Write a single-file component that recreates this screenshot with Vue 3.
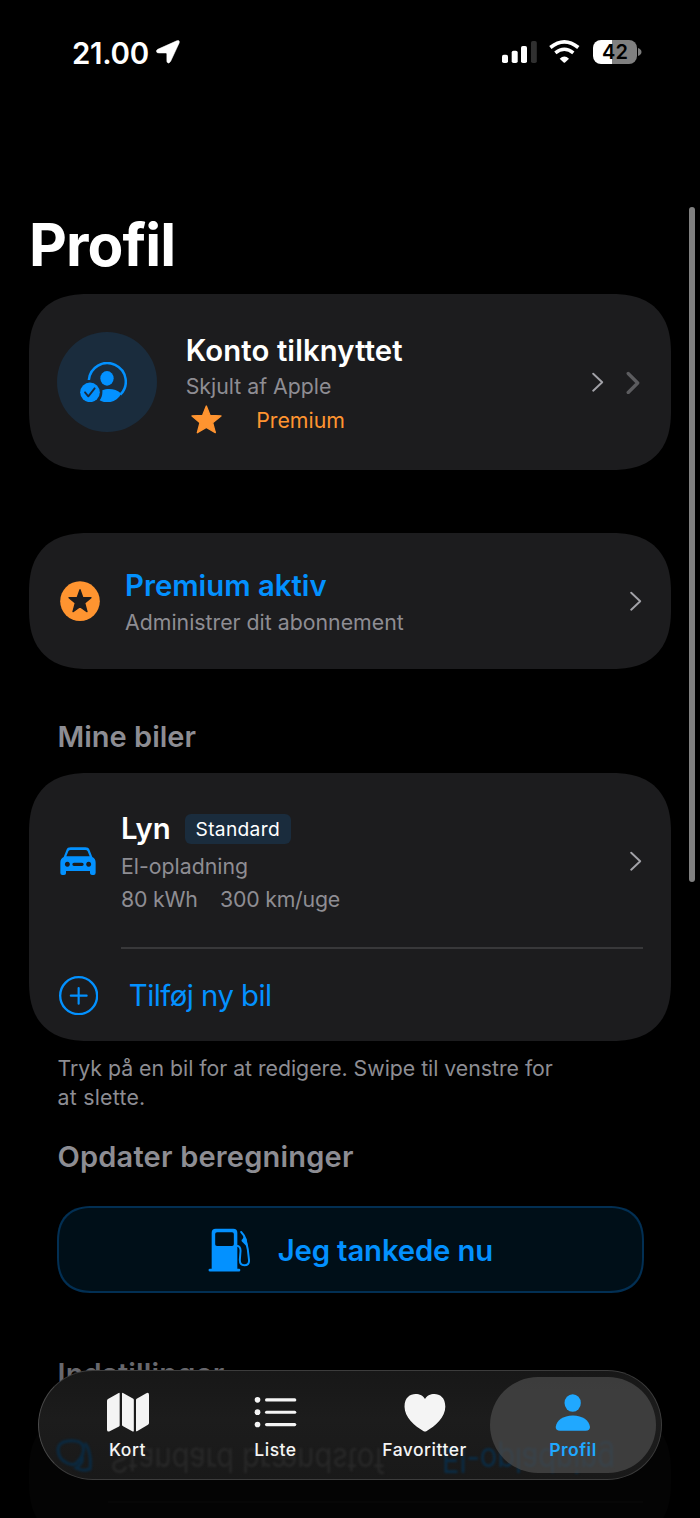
<script setup>
const tabs = [
  { id: 'kort', label: 'Kort' },
  { id: 'liste', label: 'Liste' },
  { id: 'favoritter', label: 'Favoritter' },
  { id: 'profil', label: 'Profil' },
]
const active = 'profil'
</script>

<template>
  <div class="screen">
    <header class="status">
      <div class="status-left">
        <span class="time">21.00</span>
        <svg class="loc" viewBox="468 122 72 71" width="24" height="23.7">
          <path d="M473 150 L530 124.500 Q540 121 537.500 131 L512 186 Q507 195 501.500 189 Q500.500 187 500.500 184 L500.500 164 Q500.500 161 497.500 161 L477 161 Q470 161 469 156.500 Q469 152.500 473 150Z" fill="#fff" stroke="#fff" stroke-width="1.500" />
        </svg>
      </div>
      <div class="status-right">
        <svg viewBox="0 0 35 22" width="35" height="22">
          <rect x="0" y="13.700" width="6" height="8.300" rx="1.800" fill="#fff" />
          <rect x="9.700" y="9.700" width="6" height="12.300" rx="1.800" fill="#fff" />
          <rect x="19" y="5" width="6" height="17" rx="1.800" fill="#fff" />
          <rect x="29" y="0" width="5.800" height="22" rx="1.800" fill="#303030" />
        </svg>
        <svg class="wifi" viewBox="209 61 92 70" width="30.700" height="23.300">
          <path d="M213 83.500 Q255 50 297 83.500" fill="none" stroke="#fff" stroke-width="11" />
          <path d="M228 99.500 Q255 78 282 99.500" fill="none" stroke="#fff" stroke-width="10.500" />
          <path d="M241 117 Q255 104 269 117 L257 128.500 Q255 130 253 128.500Z" fill="#fff" />
        </svg>
        <div class="battery"><span>42</span></div>
        <svg class="tip" viewBox="0 0 4 8" width="4" height="8"><path d="M0 0 Q3.500 1.500 3.500 4 Q3.500 6.500 0 8Z" fill="#7c7c7c" /></svg>
      </div>
    </header>

    <h1>Profil</h1>

    <section class="card account">
      <div class="avatar">
        <svg viewBox="179 227 141 122" width="47" height="40.700">
          <path d="M205.500 281 A55.500 55.500 0 1 1 300 325" fill="none" stroke="#0391ff" stroke-width="7.500" />
          <ellipse cx="260" cy="276" rx="20" ry="22" fill="#0391ff" />
          <path d="M246 312 C262 305 286 306 303 322 C294 338 278 348 261 348 C252 348 245 346 238 342 C244 334 247 324 246 312Z" fill="#0391ff" />
          <circle cx="209" cy="318" r="29.500" fill="#0391ff" />
          <path d="M194 318 L204 330 L223 306" fill="none" stroke="#1a2c3d" stroke-width="5.500" stroke-linecap="round" stroke-linejoin="round" />
        </svg>
      </div>
      <div class="account-text">
        <div class="headline konto">Konto tilknyttet</div>
        <div class="sub skjult">Skjult af Apple</div>
        <div class="premium">
          <svg viewBox="514 362 93 86" width="31" height="28.700">
            <path d="M560 365 L571 393 L604 395 L579 415 L587 445 L560 429 L533 445 L541 415 L517 395 L549 393Z" fill="#ff9430" stroke="#ff9430" stroke-width="4" stroke-linejoin="round" />
          </svg>
          <span>Premium</span>
        </div>
      </div>
      <svg class="chev" viewBox="0 0 13 20" width="13" height="20"><path d="M1.200 1.700 L10.200 10.200 L1.200 18.700" /></svg>
      <svg class="chev bold" viewBox="0 0 15 23" width="15" height="23"><path d="M2.200 2.500 L11.700 12 L2.200 21.500" /></svg>
    </section>

    <section class="card subscription">
      <svg viewBox="121 168 120 121" width="40" height="40.300">
        <circle cx="181" cy="228.500" r="59.500" fill="#ff9430" />
        <path d="M181 194 L189 217 L214 218 L195 234 L202 260 L181 245.500 L160 260 L167 234 L148 218 L173 217Z" fill="#1c1c1e" stroke="#1c1c1e" stroke-width="4" stroke-linejoin="round" />
      </svg>
      <div class="subscription-text">
        <div class="headline blue aktiv">Premium aktiv</div>
        <div class="sub admin">Administrer dit abonnement</div>
      </div>
      <svg class="chev" viewBox="0 0 13 20" width="13" height="20"><path d="M1.200 1.700 L10.200 10.200 L1.200 18.700" /></svg>
    </section>

    <h2 class="h-cars">Mine biler</h2>

    <section class="card cars">
      <div class="car-row">
        <svg class="car" viewBox="121 246 108 85" width="36" height="28.300">
          <path fill="#0391ff" fill-rule="evenodd" d="M132 276 L140 256 C142 249 147 247 153 247 H197 C203 247 208 249 210 256 L218 276 C225 280 228 285 228 293 V323 Q228 330 222 330 H217 Q212 330 211 325 V318 H139 V325 Q139 330 133 330 H128 Q122 330 122 324 V293 C122 285 125 280 132 276Z M140 274 L146 259 Q148 255 153 255 H197 Q202 255 204 259 L210 274Z M143 290.500 a7.500 7.500 0 1 0 .1 0Z M207 290.500 a7.500 7.500 0 1 0 .1 0Z M163 293 H187 a5 5 0 0 1 0 10 H163 a5 5 0 0 1 0 -10Z" />
        </svg>
        <div class="car-text">
          <div class="car-name"><span class="headline">Lyn</span><span class="badge">Standard</span></div>
          <div class="sub el">El-opladning</div>
          <div class="sub specs"><span>80 kWh</span><span>300 km/uge</span></div>
        </div>
        <svg class="chev" viewBox="0 0 13 20" width="13" height="20"><path d="M1.200 1.700 L10.200 10.200 L1.200 18.700" /></svg>
      </div>
      <div class="divider"></div>
      <div class="add-row">
        <svg viewBox="117 632 118 118" width="39.300" height="39.300" fill="none" stroke="#0391ff">
          <circle cx="176" cy="691" r="55.500" stroke-width="7" />
          <path d="M152.500 691 H200 M176 668 V715" stroke-width="6.500" stroke-linecap="round" />
        </svg>
        <span>Tilføj ny bil</span>
      </div>
    </section>

    <p class="footnote">Tryk på en bil for at redigere. Swipe til venstre for<br><span>at slette.</span></p>

    <h2 class="h-calc">Opdater beregninger</h2>

    <button class="refuel">
      <svg viewBox="562 113 128 132" width="42.700" height="44">
        <path fill="#0391ff" fill-rule="evenodd" d="M573 235 V127 Q573 115 585 115 H638 Q650 115 650 127 V235 H655 Q659 235 659 239 Q659 243.500 655 243.500 H568 Q563.500 243.500 563.500 239 Q563.500 235 568 235Z M589 125.500 Q583.500 125.500 583.500 131 V162 Q583.500 167 589 167 H634 Q639.500 167 639.500 162 V131 Q639.500 125.500 634 125.500Z" />
        <path d="M648 166 Q660 167 659.500 182 L657.500 208 Q657 225 671 225 Q686 225 685 209 Q683 177 675 148 Q670 133 661.500 125" fill="none" stroke="#0391ff" stroke-width="6" stroke-linecap="round" />
        <path d="M669 136 L677 145 L682 172 L663 153 Q661 149 665 147 L668 142Z" fill="#0391ff" />
      </svg>
      <span>Jeg tankede nu</span>
    </button>

    <h2 class="h-settings">Indstillinger</h2>
    <section class="card settings"><div class="faint-line"></div></section>

    <div class="scrollbar"></div>

    <nav class="tabbar">
      <div class="glass" aria-hidden="true">
        <svg class="ghost-icon" viewBox="0 0 38 34" width="38" height="34" fill="none" stroke="#0a2a42" stroke-width="3">
          <path d="M3 10 Q4 3 13 2 Q26 1 28 7 Q30 14 24 21 Q20 28 12 24 Q3 20 3 10Z" />
          <path d="M30 4 Q37 14 35 30 Q28 33 21 29 Q29 24 27 17" />
        </svg>
        <span class="ghost grey">Standard brændstof</span>
        <span class="ghost cyan">El-opladning</span>
      </div>
      <div v-for="t in tabs" :key="t.id" class="tab" :class="[t.id, { active: t.id === active }]">
        <svg v-if="t.id === 'kort'" viewBox="258 157 132 121" width="44" height="40.300">
          <path d="M261 183 Q261 180 264 178 L296 160 Q299 158.500 299 162 V257 Q299 259 297 260.500 L269 275 Q261 277.500 261 270Z M306 162 Q306 158 309 160 L340 177 Q341.500 178 341.500 181 V273 Q341.500 277 338 275.500 L308 259 Q306 258 306 255Z M348 181 Q348 179 350 177.500 L379 160.500 Q387 157 387 165 V250 Q387 253 384 255 L351 274.500 Q348 276 348 273Z" fill="#f4f4f4" />
        </svg>
        <svg v-else-if="t.id === 'liste'" viewBox="704 157 130 121" width="43.300" height="40.300" fill="#f4f4f4">
          <circle cx="714.500" cy="180.500" r="8.500" /><circle cx="714.500" cy="217.500" r="8.500" /><circle cx="714.500" cy="254.500" r="8.500" />
          <rect x="737" y="176" width="94" height="9.500" rx="4.700" /><rect x="737" y="213" width="94" height="9.500" rx="4.700" /><rect x="737" y="250" width="94" height="9.500" rx="4.700" />
        </svg>
        <svg v-else-if="t.id === 'favoritter'" viewBox="160 157 126 121" width="42" height="40.300">
          <path d="M223 178 C233 157 284 153 284 201 C284 232 254 259 227 274.500 Q223 276.500 219 274.500 C192 259 161.500 232 161.500 201 C161.500 153 213 157 223 178Z" fill="#f4f4f4" />
        </svg>
        <svg v-else viewBox="616 157 107 121" width="35.700" height="40.300" fill="#20a8ff">
          <ellipse cx="669" cy="190" rx="24.500" ry="26.500" />
          <path d="M631 273 Q618 273 618 262 C620 243 640 227.500 669.500 227.500 C699 227.500 719 243 721 262 Q721 273 708 273Z" />
        </svg>
        <span>{{ t.label }}</span>
      </div>
    </nav>
  </div>
</template>

<style>
html, body { margin: 0; background: #000; }
</style>

<style scoped>
* { box-sizing: border-box; }
.screen {
  position: relative;
  width: 700px;
  height: 1518px;
  overflow: hidden;
  background: #000;
  color: #fff;
  font-family: Inter, "Liberation Sans", sans-serif;
  white-space: nowrap;
}
svg { display: block; flex: none; }
h1, h2, p { margin: 0; }

.status { display: flex; justify-content: space-between; height: 104px; padding: 0 58px 0 72px; align-items: center; }
.status-left { display: flex; align-items: center; }
.time { font-size: 29.500px; font-weight: 600; letter-spacing: -0.300px; line-height: 36px; width: 84px; padding-top: 1px; }
.status-right { display: flex; align-items: center; }
.wifi { margin-left: 12px; }
.battery {
  margin-left: 13px; width: 44px; height: 24.500px; border-radius: 8px;
  background: linear-gradient(90deg, #fff 19px, #808080 19px);
  display: flex; align-items: center; justify-content: center;
}
.battery span { color: #000; font-size: 20px; font-weight: 600; line-height: 24px; }
.tip { margin-left: 1px; }

h1 { font-size: 58.500px; font-weight: 700; line-height: 70px; margin: 106px 0 0 29px; height: 84px; letter-spacing: -0.900px; }

.card { margin: 0 29px; width: 642px; background: #1c1c1e; border-radius: 50px; display: flex; }
.refuel { border-radius: 32px; }
@supports (corner-shape: superellipse(1.3)) {
  .card { border-radius: 60px; corner-shape: superellipse(1.3); }
  .refuel { border-radius: 36px; corner-shape: superellipse(1.3); }
}
.headline { font-size: 29.300px; font-weight: 600; line-height: 36px; }
.sub { font-size: 21.300px; line-height: 32px; color: #8e8d93; }
.blue { color: #0391ff; }
.chev { fill: none; stroke: #a2a2a8; stroke-width: 1.900; stroke-linecap: round; stroke-linejoin: round; }
.chev.bold { stroke: #5c5c5f; stroke-width: 3.300; }

.account { height: 176px; align-items: center; padding: 0 30.500px 0 28px; }
.avatar { width: 100px; height: 100px; border-radius: 50%; background: #1a2c3d; display: flex; align-items: center; justify-content: center; padding-right: 7px; }
.account-text { margin-left: 28.700px; flex: 1; padding-top: 5px; }
.konto { letter-spacing: 0.120px; margin-bottom: 1.500px; }
.premium { display: flex; align-items: center; height: 34px; color: #ff9430; font-size: 21.300px; padding: 1px 0 0 5.500px; }
.premium span { margin-left: 34px; }
.account .bold { margin-left: 21px; }

.subscription { height: 136px; margin-top: 63px; align-items: center; padding: 0 28.500px 0 31px; }
.subscription-text { flex: 1; margin-left: 25px; padding-top: 3.500px; }
.aktiv { margin-bottom: 2px; }

h2 { font-size: 29px; font-weight: 600; line-height: 36px; color: #8d8d93; margin-left: 57px; }
.h-cars { margin-top: 50px; height: 54px; padding-left: 0.500px; }

.cars { height: 268px; flex-direction: column; }
.car-row { height: 174px; display: flex; align-items: center; padding: 3px 28.500px 0 31px; }
.car-text { flex: 1; margin-left: 25px; padding-top: 4px; }
.car-name { display: flex; align-items: center; height: 38px; margin-bottom: 2px; }
.badge { margin-left: 14px; width: 106px; height: 30px; margin-top: -1px; border-radius: 6px; background: #1a2c3d; font-size: 19.200px; letter-spacing: 0.300px; line-height: 31px; text-align: center; }
.specs { display: flex; gap: 22.500px; line-height: 33px; letter-spacing: -0.220px; margin-top: 0.500px; }
.divider { height: 2px; background: #38383a; margin: 0 28px 0 92px; position: relative; top: 1px; }
.add-row { display: flex; align-items: center; height: 94px; padding: 2px 0 0 30px; color: #0391ff; font-size: 29.300px; letter-spacing: -0.530px; }
.add-row span { margin-left: 30.500px; padding-top: 1px; }

.footnote { margin: 13px 0 0 57.500px; font-size: 21.300px; line-height: 28.500px; color: #8d8d93; height: 72px; letter-spacing: -0.030px; }
.footnote span { letter-spacing: 0.250px; }
.h-calc { margin-top: 13px; margin-bottom: 31px; padding-left: 0.500px; letter-spacing: 0.200px; }

.refuel {
  display: flex; align-items: center; width: 587px; height: 87px; margin: 0 0 0 56.500px; padding: 0 0 0 149px;
  border: 2px solid #022f53; background: #000f18; color: #0391ff;
  font: 600 29.300px/36px Inter, "Liberation Sans", sans-serif; text-align: left;
}
.refuel span { margin-left: 27.500px; letter-spacing: -0.150px; padding-top: 2px; }

.h-settings { margin-top: 63px; color: #68686d; padding-left: 0.500px; letter-spacing: 0.150px; }
.settings { height: 130px; margin-top: 20px; background: #040404; }
.faint-line { height: 2px; width: 535px; margin: 89px 0 0 79px; background: #070707; }

.scrollbar { position: absolute; left: 689px; top: 207px; width: 5.500px; height: 675px; border-radius: 3px; background: #808080; }

.tabbar {
  position: absolute; left: 38px; top: 1370px; width: 624px; height: 110px; border-radius: 55px;
  border: 1.500px solid #3c3c3c; border-left-color: #4a4a4a;
  background: linear-gradient(#171717, #1c1c1c 45%, #191919);
  display: flex; padding: 6px 5px; overflow: hidden;
}
.glass { position: absolute; inset: 0; filter: blur(1.300px); }
.ghost-icon { position: absolute; left: 16px; top: 68px; }
.ghost { position: absolute; top: 71px; font-size: 29px; line-height: 34px; transform: scaleY(-1.150); }
.ghost.grey { left: 71px; color: #282828; }
.ghost.cyan { left: 403px; color: #0a2d47; }
.tab { position: relative; width: 149px; flex: none; height: 96px; display: flex; flex-direction: column; align-items: center; padding-top: 15px; color: #f4f4f4; border-radius: 48px; }
.tab.kort { width: 167px; margin-right: -10px; }
.tab span { font-size: 17.500px; font-weight: 500; line-height: 24px; margin-top: 6px; letter-spacing: 0.500px; }
.tab.active { width: 166px; margin-left: -9px; background: rgba(75, 75, 75, 0.720); color: #20a8ff; }
.tab.active span { font-weight: 600; }
</style>
